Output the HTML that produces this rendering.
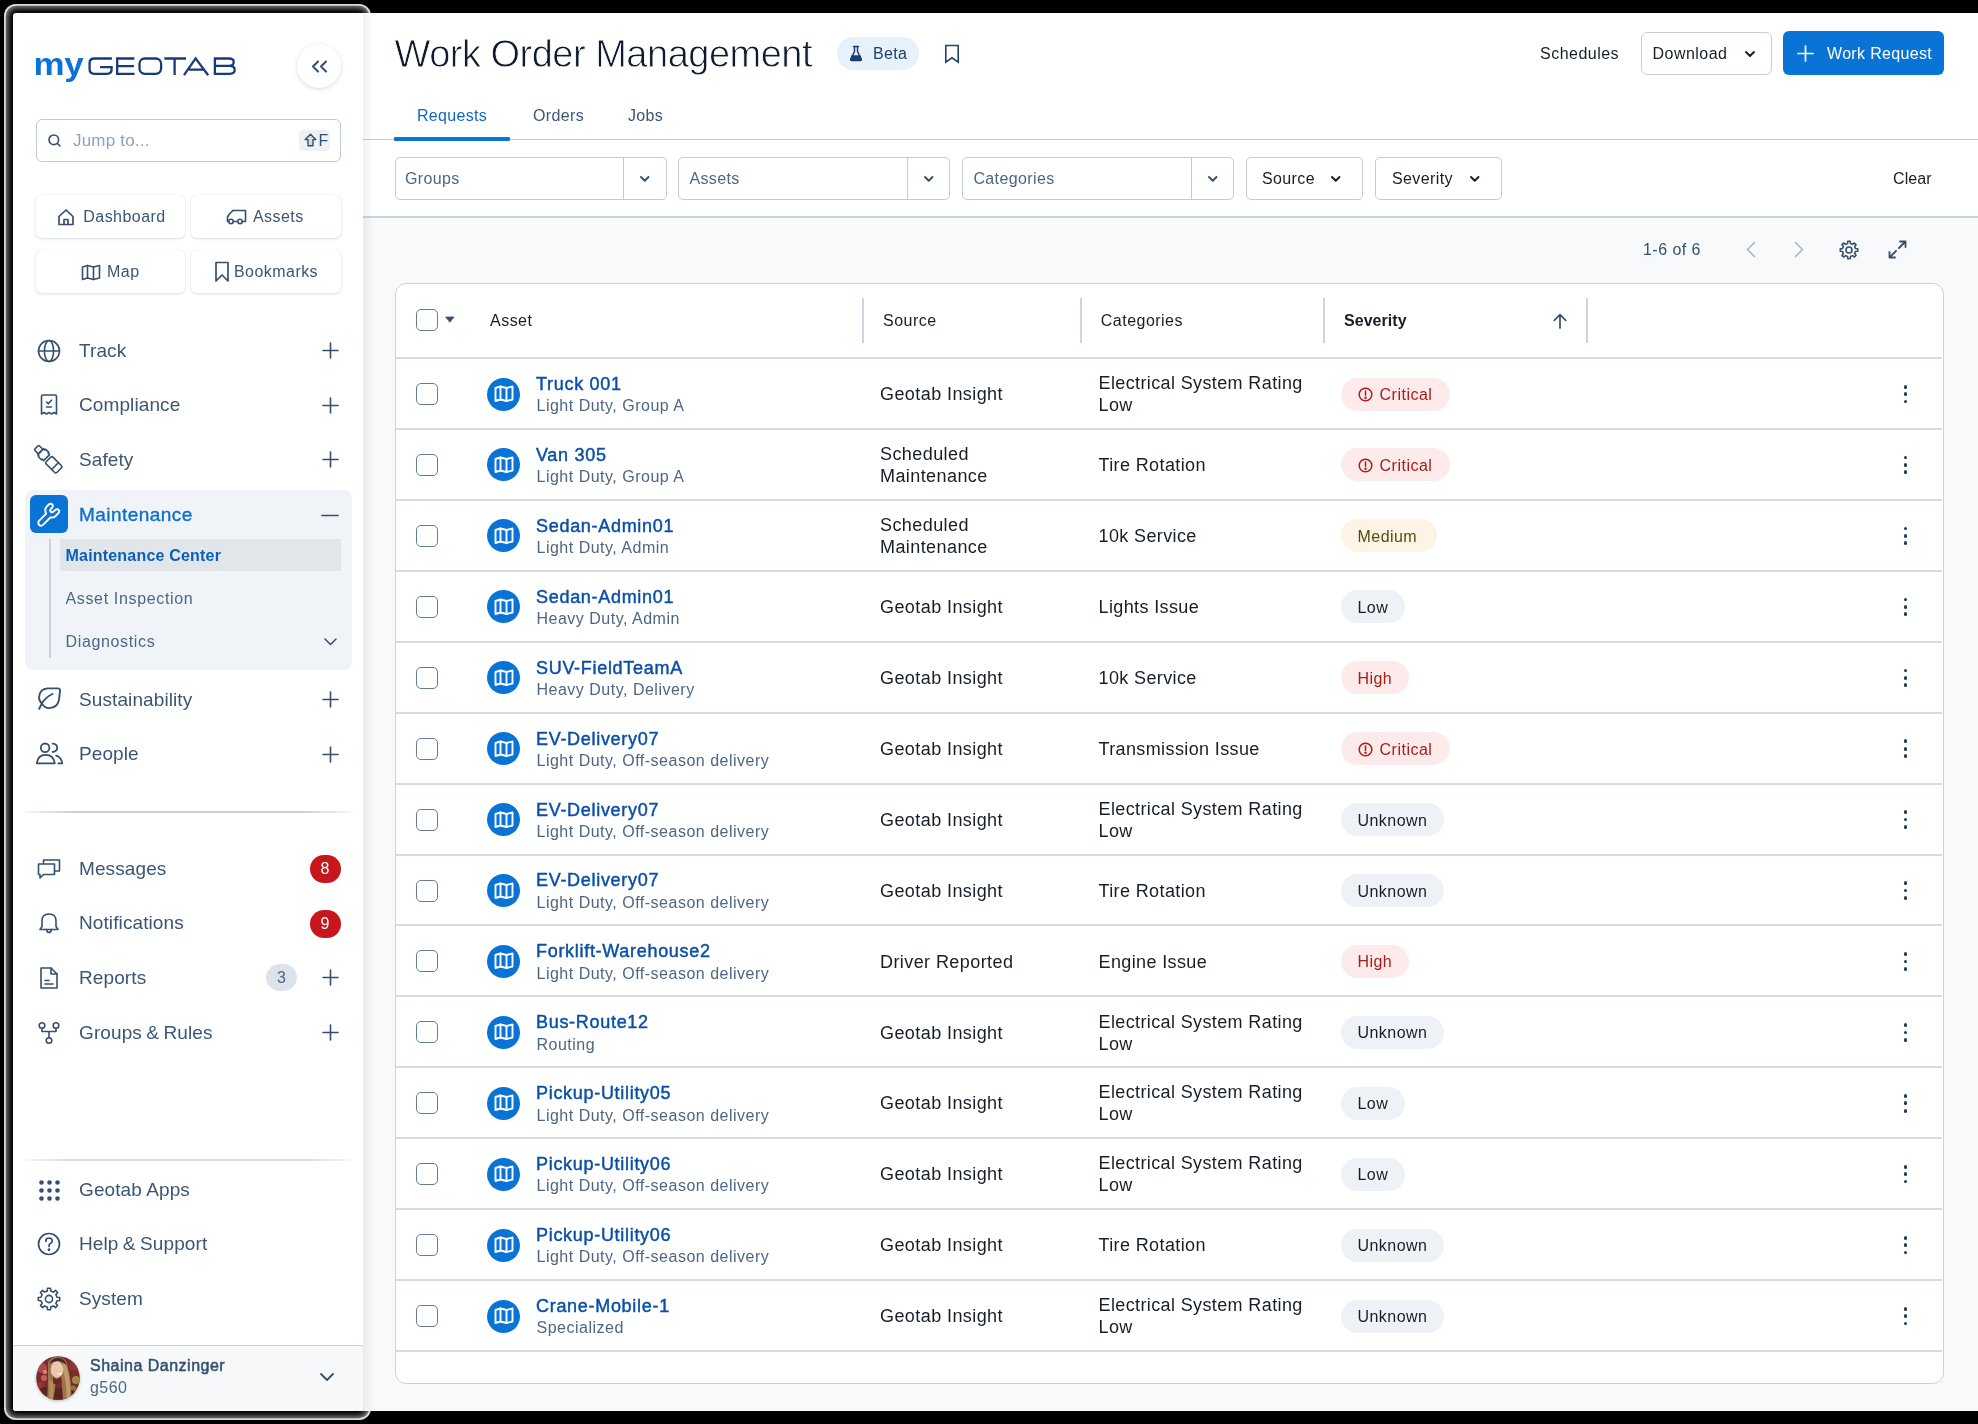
<!DOCTYPE html><html><head><meta charset="utf-8"><title>Work Order Management</title><style>
html,body{margin:0;padding:0;}
body{width:1978px;height:1424px;background:#000;position:relative;overflow:hidden;font-family:"Liberation Sans", sans-serif;}
.t{position:absolute;white-space:nowrap;}
#wrap{position:absolute;left:0;top:0;width:1978px;height:1424px;will-change:transform;}
.b{position:absolute;box-sizing:border-box;}
.i{position:absolute;overflow:visible;}
</style></head><body><div id="wrap">
<div class="b" style="left:4px;top:4px;width:367px;height:1416px;border-radius:12px;background:#000;box-shadow:inset 0 0 0 1.8px rgba(240,240,240,0.8),inset 0 0 6px 3.5px rgba(150,150,150,1);"></div>
<div class="b" style="left:13.0px;top:13.0px;width:350.0px;height:1398.0px;background:#fff;border-radius:3px 0 0 3px;"></div>
<div class="b" style="left:363.0px;top:13.0px;width:10.0px;height:1398.0px;background:linear-gradient(to right,rgba(0,0,0,0.07),rgba(0,0,0,0));"></div>
<svg class="i" style="left:30px;top:48px" width="210" height="40" viewBox="0 0 210 40"><text x="3.2" y="27" font-family="Liberation Sans" font-weight="700" font-size="31.5" fill="#0d72d8" letter-spacing="-0.4" transform="scale(1.11,1)">my</text><g transform="translate(58.4,9.3)" fill="none" stroke="#173a7a" stroke-width="2.3" stroke-linejoin="miter"><path d="M23.5 1.2H6.2Q1.2 1.2 1.2 5.6V12Q1.2 16.5 6.2 16.5H18.6Q23.2 16.5 23.2 12V9.8H11.7"/><path d="M46 1.2H28.8V16.5H46.2M28.8 8.8H45.5"/><rect x="51.1" y="1.2" width="21.6" height="15.3" rx="5.2"/><path d="M75.9 1.2H97.6M86.2 1.2V17.7"/><path d="M95.6 17.9L107.2 1.1L119.8 17.9M100.6 12.4H115.8"/><path d="M125.4 1.2H140.6Q145.3 1.2 145.3 4.7Q145.3 8.6 140.8 8.6H125.4M140.8 8.6Q146.3 8.6 146.3 12.5Q146.3 16.5 141.2 16.5H125.4M126.5 0.05V17.65"/></g></svg>
<div class="b" style="left:297.0px;top:44.0px;width:44.0px;height:44.0px;border-radius:50%;background:#fff;box-shadow:0 1px 4px rgba(30,50,80,0.18);"></div>
<svg class="i" style="left:310.5px;top:60.0px;" width="18" height="13" viewBox="0 0 18 13" fill="none" stroke="#34506e" stroke-width="2.1" stroke-linecap="round" stroke-linejoin="round"><path d="M7 1.5L2 6.5L7 11.5M15 1.5L10 6.5L15 11.5"/></svg>
<div class="b" style="left:36.0px;top:119.0px;width:305.0px;height:43.0px;border:1.5px solid #bccadb;border-radius:6px;background:#fff;"></div>
<svg class="i" style="left:48.0px;top:134.0px;" width="13" height="13" viewBox="0 0 13 13" fill="none" stroke="#34506e" stroke-width="1.6" stroke-linecap="round" stroke-linejoin="round"><circle cx="5.8" cy="5.8" r="4.8"/><path d="M9.5 9.5L12 12"/></svg>
<div class="t" style="left:73.0px;top:127.5px;height:26px;line-height:26px;font-size:17px;color:#8ea3b8;font-weight:400;letter-spacing:0.2px;">Jump to...</div>
<div class="b" style="left:299.0px;top:130.0px;width:31.0px;height:21.0px;background:#eef2f6;border-radius:4px;"></div>
<svg class="i" style="left:303.5px;top:133.0px;" width="13" height="15" viewBox="0 0 13 15" fill="none" stroke="#34506e" stroke-width="1.4" stroke-linecap="round" stroke-linejoin="round"><path d="M6.5 1.2L1.2 6.6H4V12.8H9V6.6H11.8Z" fill="#d3dce6"/></svg>
<div class="t" style="left:318.5px;top:128.5px;height:24px;line-height:24px;font-size:16px;color:#34506e;font-weight:400;letter-spacing:0px;">F</div>
<div class="b" style="left:36.0px;top:195.0px;width:149.0px;height:43.0px;background:#fff;border-radius:6px;box-shadow:0 1px 3px rgba(40,60,90,0.16),0 0 1px rgba(40,60,90,0.12);"></div>
<div class="t" style="left:83.3px;top:204.5px;height:24px;line-height:24px;font-size:16px;color:#3a5674;font-weight:400;letter-spacing:0.45px;">Dashboard</div>
<svg class="i" style="left:57.0px;top:207.5px;" width="18" height="18" viewBox="0 0 18 18" fill="none" stroke="#34506e" stroke-width="1.7" stroke-linecap="round" stroke-linejoin="round"><path d="M2 8.5L9 2L16 8.5V16.5H2Z"/><path d="M7 16.5V11.5H11V16.5"/></svg>
<div class="b" style="left:191.0px;top:195.0px;width:150.0px;height:43.0px;background:#fff;border-radius:6px;box-shadow:0 1px 3px rgba(40,60,90,0.16),0 0 1px rgba(40,60,90,0.12);"></div>
<div class="t" style="left:253.0px;top:204.5px;height:24px;line-height:24px;font-size:16px;color:#3a5674;font-weight:400;letter-spacing:0.45px;">Assets</div>
<svg class="i" style="left:226.0px;top:208.5px;" width="21" height="16" viewBox="0 0 21 16" fill="none" stroke="#34506e" stroke-width="1.6" stroke-linecap="round" stroke-linejoin="round"><path d="M7 1.5H19.5V12.5H16.5M11 12.5H7.5"/><path d="M7 1.5L3 5.5L1.5 8V12.5H2.5"/><circle cx="5" cy="12.5" r="2.2"/><circle cx="14" cy="12.5" r="2.2"/></svg>
<div class="b" style="left:36.0px;top:250.0px;width:149.0px;height:43.0px;background:#fff;border-radius:6px;box-shadow:0 1px 3px rgba(40,60,90,0.16),0 0 1px rgba(40,60,90,0.12);"></div>
<div class="t" style="left:107.0px;top:259.5px;height:24px;line-height:24px;font-size:16px;color:#3a5674;font-weight:400;letter-spacing:0.45px;">Map</div>
<svg class="i" style="left:81.0px;top:263.5px;" width="20" height="17" viewBox="0 0 20 17" fill="none" stroke="#34506e" stroke-width="1.6" stroke-linecap="round" stroke-linejoin="round"><path d="M1.5 3L6.5 1.5L12.5 3L18.5 1.5V14L12.5 15.5L6.5 14L1.5 15.5Z"/><path d="M6.5 1.5V14M12.5 3V15.5"/></svg>
<div class="b" style="left:191.0px;top:250.0px;width:150.0px;height:43.0px;background:#fff;border-radius:6px;box-shadow:0 1px 3px rgba(40,60,90,0.16),0 0 1px rgba(40,60,90,0.12);"></div>
<div class="t" style="left:234.0px;top:259.5px;height:24px;line-height:24px;font-size:16px;color:#3a5674;font-weight:400;letter-spacing:0.45px;">Bookmarks</div>
<svg class="i" style="left:214.0px;top:260.5px;" width="16" height="22" viewBox="0 0 16 22" fill="none" stroke="#34506e" stroke-width="1.7" stroke-linecap="round" stroke-linejoin="round"><path d="M2 1.5H14V20L8 14L2 20Z"/></svg>
<div class="t" style="left:79.0px;top:336.5px;height:28px;line-height:28px;font-size:19px;color:#3a5674;font-weight:400;letter-spacing:0.1px;">Track</div>
<svg class="i" style="left:37.0px;top:338.5px;" width="24" height="24" viewBox="0 0 24 24" fill="none" stroke="#34506e" stroke-width="1.6" stroke-linecap="round" stroke-linejoin="round"><circle cx="12" cy="12" r="10.5"/><ellipse cx="12" cy="12" rx="4.6" ry="10.5"/><path d="M1.5 12H22.5"/></svg>
<svg class="i" style="left:321.5px;top:342.0px;" width="17" height="17" viewBox="0 0 17 17" fill="none" stroke="#34506e" stroke-width="1.6" stroke-linecap="round" stroke-linejoin="round"><path d="M8.5 1V16M1 8.5H16"/></svg>
<div class="t" style="left:79.0px;top:391.0px;height:28px;line-height:28px;font-size:19px;color:#3a5674;font-weight:400;letter-spacing:0.1px;">Compliance</div>
<svg class="i" style="left:40.0px;top:394.0px;" width="18" height="22" viewBox="0 0 18 22" fill="none" stroke="#34506e" stroke-width="1.6" stroke-linecap="round" stroke-linejoin="round"><path d="M1.5 2.5Q1.5 1 3 1H15Q16.5 1 16.5 2.5V20L14 18.5L11.5 20L9 18.5L6.5 20L4 18.5L1.5 20Z"/><path d="M6.5 8L8.3 9.8L11.5 6.2M6.5 13H11.5"/></svg>
<svg class="i" style="left:321.5px;top:396.5px;" width="17" height="17" viewBox="0 0 17 17" fill="none" stroke="#34506e" stroke-width="1.6" stroke-linecap="round" stroke-linejoin="round"><path d="M8.5 1V16M1 8.5H16"/></svg>
<div class="t" style="left:79.0px;top:445.5px;height:28px;line-height:28px;font-size:19px;color:#3a5674;font-weight:400;letter-spacing:0.1px;">Safety</div>
<svg class="i" style="left:35.0px;top:445.5px;" width="28" height="28" viewBox="0 0 28 28" fill="none" stroke="#34506e" stroke-width="1.6" stroke-linecap="round" stroke-linejoin="round"><g transform="rotate(-45 14 14)"><rect x="10.8" y="-3.8" width="6.4" height="6" rx="1.2"/><path d="M9.8 2.2H18.2V4.2H19.2V8.5H18.2V10.6H9.8V8.5H8.8V4.2H9.8Z"/><rect x="9.2" y="13.2" width="9.6" height="15.2" rx="1.5"/><path d="M9.2 22.6H18.8"/></g></svg>
<svg class="i" style="left:321.5px;top:451.0px;" width="17" height="17" viewBox="0 0 17 17" fill="none" stroke="#34506e" stroke-width="1.6" stroke-linecap="round" stroke-linejoin="round"><path d="M8.5 1V16M1 8.5H16"/></svg>
<div class="t" style="left:79.0px;top:685.7px;height:28px;line-height:28px;font-size:19px;color:#3a5674;font-weight:400;letter-spacing:0.1px;">Sustainability</div>
<svg class="i" style="left:37.0px;top:687.4px;" width="25" height="25" viewBox="0 0 25 25" fill="none" stroke="#34506e" stroke-width="1.9" stroke-linecap="round" stroke-linejoin="round"><path d="M5 16.6Q1.5 13 2.2 9.6Q3 2 10.6 1.4H21Q23.2 1.4 23 3.8L22 12.7Q20.5 21 12.1 21.1Q7.5 21 5 16.6Z"/><path d="M2.2 21.8L5.3 15.8Q9 10 15.6 7"/></svg>
<svg class="i" style="left:321.5px;top:691.2px;" width="17" height="17" viewBox="0 0 17 17" fill="none" stroke="#34506e" stroke-width="1.6" stroke-linecap="round" stroke-linejoin="round"><path d="M8.5 1V16M1 8.5H16"/></svg>
<div class="t" style="left:79.0px;top:740.4px;height:28px;line-height:28px;font-size:19px;color:#3a5674;font-weight:400;letter-spacing:0.1px;">People</div>
<svg class="i" style="left:35.5px;top:741.9px;" width="28" height="25" viewBox="0 0 28 25" fill="none" stroke="#34506e" stroke-width="1.8" stroke-linecap="round" stroke-linejoin="round"><circle cx="9.1" cy="5.8" r="4.3"/><path d="M0.8 21.4Q1.8 12.9 9.7 12.9Q17.6 12.9 18.8 21.4Z"/><path d="M16.6 1.6Q21.2 2 21.2 5.8Q21.2 9.6 16.6 10"/><path d="M20.2 13.6Q25.6 15.5 26.3 21.4H22.3"/></svg>
<svg class="i" style="left:321.5px;top:745.9px;" width="17" height="17" viewBox="0 0 17 17" fill="none" stroke="#34506e" stroke-width="1.6" stroke-linecap="round" stroke-linejoin="round"><path d="M8.5 1V16M1 8.5H16"/></svg>
<div class="t" style="left:79.0px;top:854.8px;height:28px;line-height:28px;font-size:19px;color:#3a5674;font-weight:400;letter-spacing:0.1px;">Messages</div>
<svg class="i" style="left:37.0px;top:857.8px;" width="24" height="22" viewBox="0 0 24 22" fill="none" stroke="#34506e" stroke-width="1.6" stroke-linecap="round" stroke-linejoin="round"><path d="M6.5 5.5V2H22.5V13H17.5"/><path d="M1.5 6H17.5V16.5H6.5L3 20V16.5H1.5Z"/></svg>
<div class="t" style="left:79.0px;top:909.0px;height:28px;line-height:28px;font-size:19px;color:#3a5674;font-weight:400;letter-spacing:0.1px;">Notifications</div>
<svg class="i" style="left:38.0px;top:911.0px;" width="22" height="24" viewBox="0 0 22 24" fill="none" stroke="#34506e" stroke-width="1.6" stroke-linecap="round" stroke-linejoin="round"><path d="M2 18.5H20L18 15.5V10Q18 3 11 3Q4 3 4 10V15.5Z"/><path d="M8.5 18.5Q9 21.5 11 21.5Q13 21.5 13.5 18.5"/></svg>
<div class="t" style="left:79.0px;top:963.8px;height:28px;line-height:28px;font-size:19px;color:#3a5674;font-weight:400;letter-spacing:0.1px;">Reports</div>
<svg class="i" style="left:39.0px;top:965.8px;" width="20" height="24" viewBox="0 0 20 24" fill="none" stroke="#34506e" stroke-width="1.6" stroke-linecap="round" stroke-linejoin="round"><path d="M2 2H12L18 8V22H2Z"/><path d="M12 2V8H18"/><path d="M6 14.5H10M6 18H14"/></svg>
<svg class="i" style="left:321.5px;top:969.3px;" width="17" height="17" viewBox="0 0 17 17" fill="none" stroke="#34506e" stroke-width="1.6" stroke-linecap="round" stroke-linejoin="round"><path d="M8.5 1V16M1 8.5H16"/></svg>
<div class="t" style="left:79.0px;top:1018.5px;height:28px;line-height:28px;font-size:19px;color:#3a5674;font-weight:400;letter-spacing:0.1px;">Groups <span style="margin:0 -1px">&amp;</span> Rules</div>
<svg class="i" style="left:37.0px;top:1020.5px;" width="24" height="24" viewBox="0 0 24 24" fill="none" stroke="#34506e" stroke-width="1.6" stroke-linecap="round" stroke-linejoin="round"><circle cx="5" cy="4.5" r="2.8"/><circle cx="19" cy="4.5" r="2.8"/><circle cx="12" cy="19.5" r="2.8"/><path d="M5 7.3V10.5H19V7.3M12 10.5V16.7"/></svg>
<svg class="i" style="left:321.5px;top:1024.0px;" width="17" height="17" viewBox="0 0 17 17" fill="none" stroke="#34506e" stroke-width="1.6" stroke-linecap="round" stroke-linejoin="round"><path d="M8.5 1V16M1 8.5H16"/></svg>
<div class="t" style="left:79.0px;top:1176.0px;height:28px;line-height:28px;font-size:19px;color:#3a5674;font-weight:400;letter-spacing:0.1px;">Geotab Apps</div>
<svg class="i" style="left:38.5px;top:1179.5px;" width="21" height="21" viewBox="0 0 21 21" fill="none" stroke="#34506e" stroke-width="0" stroke-linecap="round" stroke-linejoin="round"><circle cx="2.5" cy="2.5" r="2.3" fill="#34506e" stroke="none"/><circle cx="2.5" cy="10.5" r="2.3" fill="#34506e" stroke="none"/><circle cx="2.5" cy="18.5" r="2.3" fill="#34506e" stroke="none"/><circle cx="10.5" cy="2.5" r="2.3" fill="#34506e" stroke="none"/><circle cx="10.5" cy="10.5" r="2.3" fill="#34506e" stroke="none"/><circle cx="10.5" cy="18.5" r="2.3" fill="#34506e" stroke="none"/><circle cx="18.5" cy="2.5" r="2.3" fill="#34506e" stroke="none"/><circle cx="18.5" cy="10.5" r="2.3" fill="#34506e" stroke="none"/><circle cx="18.5" cy="18.5" r="2.3" fill="#34506e" stroke="none"/></svg>
<div class="t" style="left:79.0px;top:1230.0px;height:28px;line-height:28px;font-size:19px;color:#3a5674;font-weight:400;letter-spacing:0.1px;">Help <span style="margin:0 -1px">&amp;</span> Support</div>
<svg class="i" style="left:37.0px;top:1232.0px;" width="24" height="24" viewBox="0 0 24 24" fill="none" stroke="#34506e" stroke-width="1.7" stroke-linecap="round" stroke-linejoin="round"><circle cx="12" cy="12" r="10.5"/><path d="M8.8 9.2Q8.8 6 12 6Q15.2 6 15.2 9Q15.2 11 12.8 12Q12 12.5 12 14V14.5"/><circle cx="12" cy="17.8" r="0.6" fill="#34506e"/></svg>
<div class="t" style="left:79.0px;top:1284.6px;height:28px;line-height:28px;font-size:19px;color:#3a5674;font-weight:400;letter-spacing:0.1px;">System</div>
<svg class="i" style="left:37.0px;top:1286.6px;" width="24" height="24" viewBox="0 0 24 24" fill="none" stroke="#34506e" stroke-width="1.6" stroke-linecap="round" stroke-linejoin="round"><path d="M20.02 10.24 L22.70 10.52 L22.70 13.48 L20.02 13.76 L18.91 16.43 L20.61 18.52 L18.52 20.61 L16.43 18.91 L13.76 20.02 L13.48 22.70 L10.52 22.70 L10.24 20.02 L7.57 18.91 L5.48 20.61 L3.39 18.52 L5.09 16.43 L3.98 13.76 L1.30 13.48 L1.30 10.52 L3.98 10.24 L5.09 7.57 L3.39 5.48 L5.48 3.39 L7.57 5.09 L10.24 3.98 L10.52 1.30 L13.48 1.30 L13.76 3.98 L16.43 5.09 L18.52 3.39 L20.61 5.48 L18.91 7.57Z"/><circle cx="12.0" cy="12.0" r="3.60"/></svg>
<div class="b" style="left:309.5px;top:855.0px;width:31.0px;height:28.0px;background:#c8161d;border-radius:14px;"></div>
<div class="t" style="left:309.5px;top:857.0px;height:24px;line-height:24px;font-size:16px;color:#fff;font-weight:400;letter-spacing:0px;width:31px;text-align:center;">8</div>
<div class="b" style="left:309.5px;top:909.5px;width:31.0px;height:28.0px;background:#c8161d;border-radius:14px;"></div>
<div class="t" style="left:309.5px;top:911.5px;height:24px;line-height:24px;font-size:16px;color:#fff;font-weight:400;letter-spacing:0px;width:31px;text-align:center;">9</div>
<div class="b" style="left:266.0px;top:964.0px;width:31.0px;height:27.0px;background:#dce3ea;border-radius:14px;"></div>
<div class="t" style="left:266.0px;top:965.5px;height:24px;line-height:24px;font-size:16px;color:#4c6783;font-weight:400;letter-spacing:0px;width:31px;text-align:center;">3</div>
<div class="b" style="left:25.0px;top:490.0px;width:327.0px;height:180.0px;background:#f0f3f7;border-radius:8px;"></div>
<div class="b" style="left:30.0px;top:495.0px;width:38.0px;height:38.0px;background:#0a74d6;border-radius:6px;"></div>
<svg class="i" style="left:36.0px;top:501.5px;" width="26" height="26" viewBox="0 0 26 26" fill="none" stroke="#fff" stroke-width="1.9" stroke-linecap="round" stroke-linejoin="round"><path d="M3 18.8L10.2 11.6Q9.3 10.6 9.3 8.2Q9.3 6 11 4.2L12.8 2.5Q14.6 0.9 16.2 2.3Q17.6 3.8 16.2 5.5L14.6 7.3Q13.6 8.6 14.8 9.8Q16 10.9 17.3 9.8L19.5 7.8Q21.2 6.5 22.6 7.9Q23.9 9.4 22.5 11L19.5 14.2Q18.3 15.5 16.3 15.5H14.4L7 22.9Q5.2 24.5 3.3 23Q1.5 21 3 18.8Z"/></svg>
<div class="t" style="left:79.0px;top:501.0px;height:28px;line-height:28px;font-size:19px;color:#0a6fd0;font-weight:400;letter-spacing:0.45px;-webkit-text-stroke:0.35px #0a6fd0;">Maintenance</div>
<svg class="i" style="left:321.0px;top:513.5px;" width="18" height="3" viewBox="0 0 18 3" fill="none" stroke="#34506e" stroke-width="1.6" stroke-linecap="round" stroke-linejoin="round"><path d="M1 1.5H17"/></svg>
<div class="b" style="left:49.0px;top:539.0px;width:1.5px;height:119.0px;background:#c9d3de;"></div>
<div class="b" style="left:60.0px;top:539.0px;width:281.0px;height:32.0px;background:#e1e6eb;"></div>
<div class="t" style="left:65.5px;top:544.0px;height:24px;line-height:24px;font-size:16px;color:#0a5fb8;font-weight:700;letter-spacing:0.2px;">Maintenance Center</div>
<div class="t" style="left:65.5px;top:586.7px;height:24px;line-height:24px;font-size:16px;color:#4c6783;font-weight:400;letter-spacing:0.65px;">Asset Inspection</div>
<div class="t" style="left:65.5px;top:630.0px;height:24px;line-height:24px;font-size:16px;color:#4c6783;font-weight:400;letter-spacing:0.65px;">Diagnostics</div>
<svg class="i" style="left:323.5px;top:638.2px;" width="13" height="7.5" viewBox="0 0 13 7.5" fill="none" stroke="#34506e" stroke-width="1.5" stroke-linecap="round" stroke-linejoin="round"><path d="M1 1L6.5 6.5L12 1"/></svg>
<div class="b" style="left:25.0px;top:811.0px;width:326.0px;height:1.5px;background:linear-gradient(to right,rgba(200,210,220,0.2),#c9d2dc 15%,#c9d2dc 85%,rgba(200,210,220,0.2));"></div>
<div class="b" style="left:25.0px;top:1159.0px;width:326.0px;height:1.5px;background:linear-gradient(to right,rgba(200,210,220,0.2),#d5dce3 15%,#d5dce3 85%,rgba(200,210,220,0.2));"></div>
<div class="b" style="left:13.0px;top:1345.0px;width:350.0px;height:66.0px;background:#f6f8fa;border-top:1.5px solid #c5d0db;border-radius:0 0 0 3px;"></div>
<svg class="i" style="left:35.5px;top:1356px;filter:drop-shadow(0 1px 1.5px rgba(0,0,0,0.25))" width="44" height="44" viewBox="0 0 44 44"><defs><clipPath id="av"><circle cx="22" cy="22" r="21.8"/></clipPath></defs><g clip-path="url(#av)"><rect width="44" height="44" fill="#7b2b2c"/><circle cx="6" cy="12" r="5" fill="#b04848"/><circle cx="9" cy="16" r="2.2" fill="#d88070"/><circle cx="8" cy="22" r="3" fill="#c06058"/><circle cx="38" cy="10" r="5" fill="#8a3838"/><circle cx="40" cy="24" r="4" fill="#a08a3a"/><circle cx="37" cy="33" r="3.5" fill="#8a7a38"/><circle cx="4" cy="30" r="4" fill="#9a3030"/><circle cx="23" cy="14" r="1.6" fill="#6a9a70"/><path d="M0 44V36Q6 30 14 31L30 32Q40 34 44 40V44Z" fill="#5a2420"/><path d="M12 6Q15 1 22 1Q29 1.5 31 7L34 22Q36 32 35 44H27L26 30Q25 22 24 20L20 26Q19 34 17 44H11Q12 30 12 20Z" fill="#9c7450"/><path d="M26 10Q29 20 30 30Q31 38 30 44H34Q35 32 33 20Q32 12 28 6Z" fill="#c09a6a"/><path d="M13 24Q14 34 13 44H17Q18 34 17 26Z" fill="#b58c5e"/><ellipse cx="21" cy="13.5" rx="6.3" ry="8.2" fill="#ecc7ab"/><path d="M21.5 17.5Q24 19 26 17" stroke="#fff" stroke-width="1.2" fill="none"/><path d="M13 8Q16 1.5 23 2Q29 2.5 30.5 9Q26 5 21 5Q16 5.5 13 8Z" fill="#3e2a20"/><path d="M17 21Q21 25 25 21L26 27Q21 30 17 27Z" fill="#6a2a24"/></g></svg>
<div class="t" style="left:90.0px;top:1354.4px;height:24px;line-height:24px;font-size:16px;color:#34506e;font-weight:400;letter-spacing:0.5px;-webkit-text-stroke:0.5px #34506e;">Shaina Danzinger</div>
<div class="t" style="left:90.0px;top:1376.4px;height:24px;line-height:24px;font-size:16px;color:#4c6783;font-weight:400;letter-spacing:0.45px;">g560</div>
<svg class="i" style="left:320.0px;top:1373.0px;" width="14" height="8.0" viewBox="0 0 14 8.0" fill="none" stroke="#34506e" stroke-width="1.8" stroke-linecap="round" stroke-linejoin="round"><path d="M1 1L7.0 7.0L13 1"/></svg>
<div class="b" style="left:363.0px;top:13.0px;width:1615.0px;height:1398.0px;background:#f7f9fb;"></div>
<div class="b" style="left:363.0px;top:13.0px;width:1615.0px;height:204.0px;background:#fff;"></div>
<div class="b" style="left:363.0px;top:139.0px;width:1615.0px;height:1.0px;background:#c3cdd8;"></div>
<div class="b" style="left:363.0px;top:216.0px;width:1615.0px;height:1.5px;background:#c9d3dd;"></div>
<div class="b" style="left:363.0px;top:13.0px;width:10.0px;height:1398.0px;background:linear-gradient(to right,rgba(0,0,0,0.06),rgba(0,0,0,0));"></div>
<div class="t" style="left:394.5px;top:28.5px;height:50px;line-height:50px;font-size:38px;color:#0f1b2d;font-weight:400;letter-spacing:-0.5px;-webkit-text-stroke:0.8px #fff;">Work Order Management</div>
<div class="b" style="left:837.0px;top:37.0px;width:82.0px;height:33.0px;background:#e6f1fc;border-radius:17px;"></div>
<svg class="i" style="left:849.0px;top:45.0px;" width="14" height="17" viewBox="0 0 14 17" fill="none" stroke="#1d3f6e" stroke-width="1.5" stroke-linecap="round" stroke-linejoin="round"><path d="M4.5 1.5H9.5M5.5 1.5V6.5L1.8 14.2Q1.3 15.5 2.7 15.5H11.3Q12.7 15.5 12.2 14.2L8.5 6.5V1.5"/><path d="M3 11H11L12 14.5H2Z" fill="#1d3f6e"/></svg>
<div class="t" style="left:873.0px;top:41.5px;height:24px;line-height:24px;font-size:16px;color:#1d3f6e;font-weight:400;letter-spacing:0.35px;">Beta</div>
<svg class="i" style="left:944.0px;top:43.5px;stroke-linejoin:miter;stroke-linecap:butt;" width="16" height="20" viewBox="0 0 16 20" fill="none" stroke="#244466" stroke-width="1.6" stroke-linecap="round" stroke-linejoin="round"><path d="M1.8 1.5H14.2V18.2L8 13.8L1.8 18.2Z"/></svg>
<div class="t" style="left:1540.0px;top:41.5px;height:24px;line-height:24px;font-size:16px;color:#171e29;font-weight:400;letter-spacing:0.48px;">Schedules</div>
<div class="b" style="left:1641.0px;top:31.5px;width:130.5px;height:43.3px;background:#fff;border:1.8px solid #c5d0db;border-radius:6px;"></div>
<div class="t" style="left:1652.5px;top:41.8px;height:24px;line-height:24px;font-size:16px;color:#171e29;font-weight:400;letter-spacing:0.47px;">Download</div>
<svg class="i" style="left:1745.0px;top:50.5px;" width="10" height="6.0" viewBox="0 0 10 6.0" fill="none" stroke="#171e29" stroke-width="1.9" stroke-linecap="round" stroke-linejoin="round"><path d="M1 1L5.0 5.0L9 1"/></svg>
<div class="b" style="left:1783.0px;top:31.3px;width:161.0px;height:43.5px;background:#0a74d6;border-radius:6px;"></div>
<svg class="i" style="left:1796.5px;top:44.5px;" width="17" height="17" viewBox="0 0 17 17" fill="none" stroke="#fff" stroke-width="1.7" stroke-linecap="round" stroke-linejoin="round"><path d="M8.5 1V16M1 8.5H16"/></svg>
<div class="t" style="left:1827.0px;top:41.8px;height:24px;line-height:24px;font-size:16px;color:#fff;font-weight:400;letter-spacing:0.33px;">Work Request</div>
<div class="t" style="left:417.0px;top:103.5px;height:24px;line-height:24px;font-size:16px;color:#1467c0;font-weight:400;letter-spacing:0.3px;">Requests</div>
<div class="t" style="left:533.0px;top:103.5px;height:24px;line-height:24px;font-size:16px;color:#3a5674;font-weight:400;letter-spacing:0.35px;">Orders</div>
<div class="t" style="left:628.0px;top:103.5px;height:24px;line-height:24px;font-size:16px;color:#3a5674;font-weight:400;letter-spacing:0.35px;">Jobs</div>
<div class="b" style="left:394.0px;top:136.5px;width:116.0px;height:4.0px;background:#0a74d6;border-radius:1px;"></div>
<div class="b" style="left:394.5px;top:157.0px;width:272.5px;height:43.0px;background:#fff;border:1.5px solid #c2ccd7;border-radius:5px;"></div>
<div class="b" style="left:622.5px;top:158.0px;width:1.5px;height:41.0px;background:#c2ccd7;"></div>
<div class="t" style="left:405.0px;top:166.5px;height:24px;line-height:24px;font-size:16px;color:#4c6783;font-weight:400;letter-spacing:0.38px;">Groups</div>
<svg class="i" style="left:640.0px;top:175.6px;" width="9.5" height="5.75" viewBox="0 0 9.5 5.75" fill="none" stroke="#34506e" stroke-width="1.9" stroke-linecap="round" stroke-linejoin="round"><path d="M1 1L4.75 4.75L8.5 1"/></svg>
<div class="b" style="left:678.3px;top:157.0px;width:272.0px;height:43.0px;background:#fff;border:1.5px solid #c2ccd7;border-radius:5px;"></div>
<div class="b" style="left:906.5px;top:158.0px;width:1.5px;height:41.0px;background:#c2ccd7;"></div>
<div class="t" style="left:689.4px;top:166.5px;height:24px;line-height:24px;font-size:16px;color:#4c6783;font-weight:400;letter-spacing:0.38px;">Assets</div>
<svg class="i" style="left:924.2px;top:175.6px;" width="9.5" height="5.75" viewBox="0 0 9.5 5.75" fill="none" stroke="#34506e" stroke-width="1.9" stroke-linecap="round" stroke-linejoin="round"><path d="M1 1L4.75 4.75L8.5 1"/></svg>
<div class="b" style="left:962.0px;top:157.0px;width:272.0px;height:43.0px;background:#fff;border:1.5px solid #c2ccd7;border-radius:5px;"></div>
<div class="b" style="left:1190.5px;top:158.0px;width:1.5px;height:41.0px;background:#c2ccd7;"></div>
<div class="t" style="left:973.4px;top:166.5px;height:24px;line-height:24px;font-size:16px;color:#4c6783;font-weight:400;letter-spacing:0.38px;">Categories</div>
<svg class="i" style="left:1207.8px;top:175.6px;" width="9.5" height="5.75" viewBox="0 0 9.5 5.75" fill="none" stroke="#34506e" stroke-width="1.9" stroke-linecap="round" stroke-linejoin="round"><path d="M1 1L4.75 4.75L8.5 1"/></svg>
<div class="b" style="left:1246.0px;top:157.0px;width:117.0px;height:43.0px;background:#fff;border:1.5px solid #c2ccd7;border-radius:5px;"></div>
<div class="t" style="left:1262.0px;top:166.5px;height:24px;line-height:24px;font-size:16px;color:#171e29;font-weight:400;letter-spacing:0.38px;">Source</div>
<svg class="i" style="left:1331.2px;top:175.6px;" width="9.5" height="5.75" viewBox="0 0 9.5 5.75" fill="none" stroke="#171e29" stroke-width="1.9" stroke-linecap="round" stroke-linejoin="round"><path d="M1 1L4.75 4.75L8.5 1"/></svg>
<div class="b" style="left:1375.0px;top:157.0px;width:126.5px;height:43.0px;background:#fff;border:1.5px solid #c2ccd7;border-radius:5px;"></div>
<div class="t" style="left:1392.0px;top:166.5px;height:24px;line-height:24px;font-size:16px;color:#171e29;font-weight:400;letter-spacing:0.38px;">Severity</div>
<svg class="i" style="left:1470.2px;top:175.6px;" width="9.5" height="5.75" viewBox="0 0 9.5 5.75" fill="none" stroke="#171e29" stroke-width="1.9" stroke-linecap="round" stroke-linejoin="round"><path d="M1 1L4.75 4.75L8.5 1"/></svg>
<div class="t" style="left:1893.0px;top:166.5px;height:24px;line-height:24px;font-size:16px;color:#171e29;font-weight:400;letter-spacing:0.1px;">Clear</div>
<div class="t" style="left:1643.0px;top:238.4px;height:24px;line-height:24px;font-size:16px;color:#34506e;font-weight:400;letter-spacing:0.46px;">1-6 of 6</div>
<svg class="i" style="left:1744.0px;top:241.0px;" width="13" height="17" viewBox="0 0 13 17" fill="none" stroke="#a9b9c9" stroke-width="1.7" stroke-linecap="round" stroke-linejoin="round"><path d="M10.5 1.5L3.5 8.5L10.5 15.5"/></svg>
<svg class="i" style="left:1793.0px;top:241.0px;" width="13" height="17" viewBox="0 0 13 17" fill="none" stroke="#a9b9c9" stroke-width="1.7" stroke-linecap="round" stroke-linejoin="round"><path d="M2.5 1.5L9.5 8.5L2.5 15.5"/></svg>
<svg class="i" style="left:1838.5px;top:239.7px;" width="20" height="20" viewBox="0 0 20 20" fill="none" stroke="#34506e" stroke-width="1.6" stroke-linecap="round" stroke-linejoin="round"><path d="M16.53 8.57 L18.72 8.79 L18.72 11.21 L16.53 11.43 L15.63 13.61 L17.02 15.31 L15.31 17.02 L13.61 15.63 L11.43 16.53 L11.21 18.72 L8.79 18.72 L8.57 16.53 L6.39 15.63 L4.69 17.02 L2.98 15.31 L4.37 13.61 L3.47 11.43 L1.28 11.21 L1.28 8.79 L3.47 8.57 L4.37 6.39 L2.98 4.69 L4.69 2.98 L6.39 4.37 L8.57 3.47 L8.79 1.28 L11.21 1.28 L11.43 3.47 L13.61 4.37 L15.31 2.98 L17.02 4.69 L15.63 6.39Z"/><circle cx="10.0" cy="10.0" r="3.00"/></svg>
<svg class="i" style="left:1888.0px;top:240.0px;" width="19" height="19" viewBox="0 0 19 19" fill="none" stroke="#34506e" stroke-width="1.8" stroke-linecap="round" stroke-linejoin="round"><path d="M11 8L17.5 1.5M12 1.5H17.5V7M8 11L1.5 17.5M1.5 12V17.5H7"/></svg>
<div class="b" style="left:394.7px;top:283.0px;width:1549.0px;height:1101.0px;background:#fff;border:1.5px solid #c9d3dd;border-radius:11px;"></div>
<div class="b" style="left:416.0px;top:309.0px;width:22.0px;height:22.0px;border:1.6px solid #647d96;border-radius:5px;background:#fff;"></div>
<svg class="i" style="left:445.0px;top:316.0px;" width="10" height="7" viewBox="0 0 10 7" fill="none" stroke="#34506e" stroke-width="0.8" stroke-linecap="round" stroke-linejoin="round"><path d="M1 1H9L5 6Z" fill="#34506e"/></svg>
<div class="t" style="left:490.0px;top:309.2px;height:24px;line-height:24px;font-size:16px;color:#171e29;font-weight:400;letter-spacing:0.48px;">Asset</div>
<div class="t" style="left:883.0px;top:309.2px;height:24px;line-height:24px;font-size:16px;color:#171e29;font-weight:400;letter-spacing:0.48px;">Source</div>
<div class="t" style="left:1100.8px;top:309.2px;height:24px;line-height:24px;font-size:16px;color:#171e29;font-weight:400;letter-spacing:0.48px;">Categories</div>
<div class="t" style="left:1344.0px;top:309.2px;height:24px;line-height:24px;font-size:16px;color:#171e29;font-weight:700;letter-spacing:0.05px;">Severity</div>
<svg class="i" style="left:1552.0px;top:312.0px;" width="16" height="18" viewBox="0 0 16 18" fill="none" stroke="#34506e" stroke-width="1.7" stroke-linecap="round" stroke-linejoin="round"><path d="M8 16V2.8M2.3 8.3L8 2.5L13.7 8.3"/></svg>
<div class="b" style="left:862.4px;top:298.0px;width:2.0px;height:44.5px;background:#cdd6df;"></div>
<div class="b" style="left:1080.2px;top:298.0px;width:2.0px;height:44.5px;background:#cdd6df;"></div>
<div class="b" style="left:1323.3px;top:298.0px;width:2.0px;height:44.5px;background:#cdd6df;"></div>
<div class="b" style="left:1585.5px;top:298.0px;width:2.0px;height:44.5px;background:#cdd6df;"></div>
<div class="b" style="left:396.0px;top:357.0px;width:1546.0px;height:2.0px;background:#d3dce5;"></div>
<div class="b" style="left:396.0px;top:428.0px;width:1546.0px;height:2.0px;background:#d3dce5;"></div>
<div class="b" style="left:416.0px;top:383.0px;width:22.0px;height:22.0px;border:1.6px solid #647d96;border-radius:5px;background:#fff;"></div>
<div class="b" style="left:487.0px;top:377.5px;width:33.0px;height:33.0px;background:#0a74d6;border-radius:50%;"></div>
<svg class="i" style="left:492.5px;top:384.0px;" width="22" height="20" viewBox="0 0 22 20" fill="none" stroke="#fff" stroke-width="1.9" stroke-linecap="round" stroke-linejoin="round"><path d="M2.5 4L7.5 2.5L13.5 4L19.5 2.5V15.5L13.5 17L7.5 15.5L2.5 17Z"/><path d="M7.5 2.5V15.5M13.5 4V17"/></svg>
<div class="t" style="left:536.0px;top:370.9px;height:27px;line-height:27px;font-size:18px;color:#0a4fa8;font-weight:400;letter-spacing:0.7px;-webkit-text-stroke:0.45px #0a4fa8;">Truck 001</div>
<div class="t" style="left:536.5px;top:394.2px;height:24px;line-height:24px;font-size:16px;color:#4c6783;font-weight:400;letter-spacing:0.5px;">Light Duty, Group A</div>
<div class="t" style="left:880.0px;top:381.1px;height:27px;line-height:27px;font-size:18px;color:#171e29;font-weight:400;letter-spacing:0.42px;">Geotab Insight</div>
<div class="t" style="left:1098.5px;top:370.1px;height:27px;line-height:27px;font-size:18px;color:#171e29;font-weight:400;letter-spacing:0.38px;">Electrical System Rating</div>
<div class="t" style="left:1098.5px;top:392.1px;height:27px;line-height:27px;font-size:18px;color:#171e29;font-weight:400;letter-spacing:0.38px;">Low</div>
<div class="b" style="left:1341.0px;top:377.5px;width:109.0px;height:33.0px;background:#fdeaea;border-radius:16.5px;"></div>
<svg class="i" style="left:1357.5px;top:387.3px;" width="15" height="15" viewBox="0 0 15 15" fill="none" stroke="#a81e18" stroke-width="1.5" stroke-linecap="round" stroke-linejoin="round"><circle cx="7.5" cy="7.5" r="6.3"/><path d="M7.5 4V8.3"/><circle cx="7.5" cy="10.8" r="0.5" fill="#a81e18"/></svg>
<div class="t" style="left:1379.5px;top:383.0px;height:24px;line-height:24px;font-size:16px;color:#a81e18;font-weight:400;letter-spacing:0.5px;">Critical</div>
<div class="b" style="left:1903.7px;top:384.8px;width:3.8px;height:3.8px;background:#1d3a5c;border-radius:50%;"></div>
<div class="b" style="left:1903.7px;top:392.1px;width:3.8px;height:3.8px;background:#1d3a5c;border-radius:50%;"></div>
<div class="b" style="left:1903.7px;top:399.5px;width:3.8px;height:3.8px;background:#1d3a5c;border-radius:50%;"></div>
<div class="b" style="left:396.0px;top:499.0px;width:1546.0px;height:2.0px;background:#d3dce5;"></div>
<div class="b" style="left:416.0px;top:453.9px;width:22.0px;height:22.0px;border:1.6px solid #647d96;border-radius:5px;background:#fff;"></div>
<div class="b" style="left:487.0px;top:448.4px;width:33.0px;height:33.0px;background:#0a74d6;border-radius:50%;"></div>
<svg class="i" style="left:492.5px;top:454.9px;" width="22" height="20" viewBox="0 0 22 20" fill="none" stroke="#fff" stroke-width="1.9" stroke-linecap="round" stroke-linejoin="round"><path d="M2.5 4L7.5 2.5L13.5 4L19.5 2.5V15.5L13.5 17L7.5 15.5L2.5 17Z"/><path d="M7.5 2.5V15.5M13.5 4V17"/></svg>
<div class="t" style="left:536.0px;top:441.8px;height:27px;line-height:27px;font-size:18px;color:#0a4fa8;font-weight:400;letter-spacing:0.7px;-webkit-text-stroke:0.45px #0a4fa8;">Van 305</div>
<div class="t" style="left:536.5px;top:465.1px;height:24px;line-height:24px;font-size:16px;color:#4c6783;font-weight:400;letter-spacing:0.5px;">Light Duty, Group A</div>
<div class="t" style="left:880.0px;top:441.0px;height:27px;line-height:27px;font-size:18px;color:#171e29;font-weight:400;letter-spacing:0.42px;">Scheduled</div>
<div class="t" style="left:880.0px;top:463.0px;height:27px;line-height:27px;font-size:18px;color:#171e29;font-weight:400;letter-spacing:0.42px;">Maintenance</div>
<div class="t" style="left:1098.5px;top:452.0px;height:27px;line-height:27px;font-size:18px;color:#171e29;font-weight:400;letter-spacing:0.38px;">Tire Rotation</div>
<div class="b" style="left:1341.0px;top:448.4px;width:109.0px;height:33.0px;background:#fdeaea;border-radius:16.5px;"></div>
<svg class="i" style="left:1357.5px;top:458.2px;" width="15" height="15" viewBox="0 0 15 15" fill="none" stroke="#a81e18" stroke-width="1.5" stroke-linecap="round" stroke-linejoin="round"><circle cx="7.5" cy="7.5" r="6.3"/><path d="M7.5 4V8.3"/><circle cx="7.5" cy="10.8" r="0.5" fill="#a81e18"/></svg>
<div class="t" style="left:1379.5px;top:453.9px;height:24px;line-height:24px;font-size:16px;color:#a81e18;font-weight:400;letter-spacing:0.5px;">Critical</div>
<div class="b" style="left:1903.7px;top:455.7px;width:3.8px;height:3.8px;background:#1d3a5c;border-radius:50%;"></div>
<div class="b" style="left:1903.7px;top:463.0px;width:3.8px;height:3.8px;background:#1d3a5c;border-radius:50%;"></div>
<div class="b" style="left:1903.7px;top:470.4px;width:3.8px;height:3.8px;background:#1d3a5c;border-radius:50%;"></div>
<div class="b" style="left:396.0px;top:570.0px;width:1546.0px;height:2.0px;background:#d3dce5;"></div>
<div class="b" style="left:416.0px;top:524.9px;width:22.0px;height:22.0px;border:1.6px solid #647d96;border-radius:5px;background:#fff;"></div>
<div class="b" style="left:487.0px;top:519.4px;width:33.0px;height:33.0px;background:#0a74d6;border-radius:50%;"></div>
<svg class="i" style="left:492.5px;top:525.9px;" width="22" height="20" viewBox="0 0 22 20" fill="none" stroke="#fff" stroke-width="1.9" stroke-linecap="round" stroke-linejoin="round"><path d="M2.5 4L7.5 2.5L13.5 4L19.5 2.5V15.5L13.5 17L7.5 15.5L2.5 17Z"/><path d="M7.5 2.5V15.5M13.5 4V17"/></svg>
<div class="t" style="left:536.0px;top:512.8px;height:27px;line-height:27px;font-size:18px;color:#0a4fa8;font-weight:400;letter-spacing:0.7px;-webkit-text-stroke:0.45px #0a4fa8;">Sedan-Admin01</div>
<div class="t" style="left:536.5px;top:536.1px;height:24px;line-height:24px;font-size:16px;color:#4c6783;font-weight:400;letter-spacing:0.5px;">Light Duty, Admin</div>
<div class="t" style="left:880.0px;top:512.0px;height:27px;line-height:27px;font-size:18px;color:#171e29;font-weight:400;letter-spacing:0.42px;">Scheduled</div>
<div class="t" style="left:880.0px;top:534.0px;height:27px;line-height:27px;font-size:18px;color:#171e29;font-weight:400;letter-spacing:0.42px;">Maintenance</div>
<div class="t" style="left:1098.5px;top:523.0px;height:27px;line-height:27px;font-size:18px;color:#171e29;font-weight:400;letter-spacing:0.38px;">10k Service</div>
<div class="b" style="left:1341.0px;top:519.4px;width:95.5px;height:33.0px;background:#fdf4e5;border-radius:16.5px;"></div>
<div class="t" style="left:1357.5px;top:524.9px;height:24px;line-height:24px;font-size:16px;color:#5a4810;font-weight:400;letter-spacing:0.45px;">Medium</div>
<div class="b" style="left:1903.7px;top:526.6px;width:3.8px;height:3.8px;background:#1d3a5c;border-radius:50%;"></div>
<div class="b" style="left:1903.7px;top:534.0px;width:3.8px;height:3.8px;background:#1d3a5c;border-radius:50%;"></div>
<div class="b" style="left:1903.7px;top:541.3px;width:3.8px;height:3.8px;background:#1d3a5c;border-radius:50%;"></div>
<div class="b" style="left:396.0px;top:641.0px;width:1546.0px;height:2.0px;background:#d3dce5;"></div>
<div class="b" style="left:416.0px;top:595.8px;width:22.0px;height:22.0px;border:1.6px solid #647d96;border-radius:5px;background:#fff;"></div>
<div class="b" style="left:487.0px;top:590.3px;width:33.0px;height:33.0px;background:#0a74d6;border-radius:50%;"></div>
<svg class="i" style="left:492.5px;top:596.8px;" width="22" height="20" viewBox="0 0 22 20" fill="none" stroke="#fff" stroke-width="1.9" stroke-linecap="round" stroke-linejoin="round"><path d="M2.5 4L7.5 2.5L13.5 4L19.5 2.5V15.5L13.5 17L7.5 15.5L2.5 17Z"/><path d="M7.5 2.5V15.5M13.5 4V17"/></svg>
<div class="t" style="left:536.0px;top:583.7px;height:27px;line-height:27px;font-size:18px;color:#0a4fa8;font-weight:400;letter-spacing:0.7px;-webkit-text-stroke:0.45px #0a4fa8;">Sedan-Admin01</div>
<div class="t" style="left:536.5px;top:607.0px;height:24px;line-height:24px;font-size:16px;color:#4c6783;font-weight:400;letter-spacing:0.5px;">Heavy Duty, Admin</div>
<div class="t" style="left:880.0px;top:593.9px;height:27px;line-height:27px;font-size:18px;color:#171e29;font-weight:400;letter-spacing:0.42px;">Geotab Insight</div>
<div class="t" style="left:1098.5px;top:593.9px;height:27px;line-height:27px;font-size:18px;color:#171e29;font-weight:400;letter-spacing:0.38px;">Lights Issue</div>
<div class="b" style="left:1341.0px;top:590.3px;width:64.0px;height:33.0px;background:#eef2f6;border-radius:16.5px;"></div>
<div class="t" style="left:1357.5px;top:595.8px;height:24px;line-height:24px;font-size:16px;color:#171e29;font-weight:400;letter-spacing:0.45px;">Low</div>
<div class="b" style="left:1903.7px;top:597.5px;width:3.8px;height:3.8px;background:#1d3a5c;border-radius:50%;"></div>
<div class="b" style="left:1903.7px;top:604.9px;width:3.8px;height:3.8px;background:#1d3a5c;border-radius:50%;"></div>
<div class="b" style="left:1903.7px;top:612.2px;width:3.8px;height:3.8px;background:#1d3a5c;border-radius:50%;"></div>
<div class="b" style="left:396.0px;top:712.0px;width:1546.0px;height:2.0px;background:#d3dce5;"></div>
<div class="b" style="left:416.0px;top:666.7px;width:22.0px;height:22.0px;border:1.6px solid #647d96;border-radius:5px;background:#fff;"></div>
<div class="b" style="left:487.0px;top:661.2px;width:33.0px;height:33.0px;background:#0a74d6;border-radius:50%;"></div>
<svg class="i" style="left:492.5px;top:667.7px;" width="22" height="20" viewBox="0 0 22 20" fill="none" stroke="#fff" stroke-width="1.9" stroke-linecap="round" stroke-linejoin="round"><path d="M2.5 4L7.5 2.5L13.5 4L19.5 2.5V15.5L13.5 17L7.5 15.5L2.5 17Z"/><path d="M7.5 2.5V15.5M13.5 4V17"/></svg>
<div class="t" style="left:536.0px;top:654.6px;height:27px;line-height:27px;font-size:18px;color:#0a4fa8;font-weight:400;letter-spacing:0.7px;-webkit-text-stroke:0.45px #0a4fa8;">SUV-FieldTeamA</div>
<div class="t" style="left:536.5px;top:677.9px;height:24px;line-height:24px;font-size:16px;color:#4c6783;font-weight:400;letter-spacing:0.5px;">Heavy Duty, Delivery</div>
<div class="t" style="left:880.0px;top:664.8px;height:27px;line-height:27px;font-size:18px;color:#171e29;font-weight:400;letter-spacing:0.42px;">Geotab Insight</div>
<div class="t" style="left:1098.5px;top:664.8px;height:27px;line-height:27px;font-size:18px;color:#171e29;font-weight:400;letter-spacing:0.38px;">10k Service</div>
<div class="b" style="left:1341.0px;top:661.2px;width:68.0px;height:33.0px;background:#fdeaea;border-radius:16.5px;"></div>
<div class="t" style="left:1357.5px;top:666.7px;height:24px;line-height:24px;font-size:16px;color:#a81e18;font-weight:400;letter-spacing:0.45px;">High</div>
<div class="b" style="left:1903.7px;top:668.5px;width:3.8px;height:3.8px;background:#1d3a5c;border-radius:50%;"></div>
<div class="b" style="left:1903.7px;top:675.8px;width:3.8px;height:3.8px;background:#1d3a5c;border-radius:50%;"></div>
<div class="b" style="left:1903.7px;top:683.2px;width:3.8px;height:3.8px;background:#1d3a5c;border-radius:50%;"></div>
<div class="b" style="left:396.0px;top:783.0px;width:1546.0px;height:2.0px;background:#d3dce5;"></div>
<div class="b" style="left:416.0px;top:737.7px;width:22.0px;height:22.0px;border:1.6px solid #647d96;border-radius:5px;background:#fff;"></div>
<div class="b" style="left:487.0px;top:732.2px;width:33.0px;height:33.0px;background:#0a74d6;border-radius:50%;"></div>
<svg class="i" style="left:492.5px;top:738.7px;" width="22" height="20" viewBox="0 0 22 20" fill="none" stroke="#fff" stroke-width="1.9" stroke-linecap="round" stroke-linejoin="round"><path d="M2.5 4L7.5 2.5L13.5 4L19.5 2.5V15.5L13.5 17L7.5 15.5L2.5 17Z"/><path d="M7.5 2.5V15.5M13.5 4V17"/></svg>
<div class="t" style="left:536.0px;top:725.6px;height:27px;line-height:27px;font-size:18px;color:#0a4fa8;font-weight:400;letter-spacing:0.7px;-webkit-text-stroke:0.45px #0a4fa8;">EV-Delivery07</div>
<div class="t" style="left:536.5px;top:748.9px;height:24px;line-height:24px;font-size:16px;color:#4c6783;font-weight:400;letter-spacing:0.5px;">Light Duty, Off-season delivery</div>
<div class="t" style="left:880.0px;top:735.8px;height:27px;line-height:27px;font-size:18px;color:#171e29;font-weight:400;letter-spacing:0.42px;">Geotab Insight</div>
<div class="t" style="left:1098.5px;top:735.8px;height:27px;line-height:27px;font-size:18px;color:#171e29;font-weight:400;letter-spacing:0.38px;">Transmission Issue</div>
<div class="b" style="left:1341.0px;top:732.2px;width:109.0px;height:33.0px;background:#fdeaea;border-radius:16.5px;"></div>
<svg class="i" style="left:1357.5px;top:742.0px;" width="15" height="15" viewBox="0 0 15 15" fill="none" stroke="#a81e18" stroke-width="1.5" stroke-linecap="round" stroke-linejoin="round"><circle cx="7.5" cy="7.5" r="6.3"/><path d="M7.5 4V8.3"/><circle cx="7.5" cy="10.8" r="0.5" fill="#a81e18"/></svg>
<div class="t" style="left:1379.5px;top:737.7px;height:24px;line-height:24px;font-size:16px;color:#a81e18;font-weight:400;letter-spacing:0.5px;">Critical</div>
<div class="b" style="left:1903.7px;top:739.4px;width:3.8px;height:3.8px;background:#1d3a5c;border-radius:50%;"></div>
<div class="b" style="left:1903.7px;top:746.8px;width:3.8px;height:3.8px;background:#1d3a5c;border-radius:50%;"></div>
<div class="b" style="left:1903.7px;top:754.1px;width:3.8px;height:3.8px;background:#1d3a5c;border-radius:50%;"></div>
<div class="b" style="left:396.0px;top:854.0px;width:1546.0px;height:2.0px;background:#d3dce5;"></div>
<div class="b" style="left:416.0px;top:808.6px;width:22.0px;height:22.0px;border:1.6px solid #647d96;border-radius:5px;background:#fff;"></div>
<div class="b" style="left:487.0px;top:803.1px;width:33.0px;height:33.0px;background:#0a74d6;border-radius:50%;"></div>
<svg class="i" style="left:492.5px;top:809.6px;" width="22" height="20" viewBox="0 0 22 20" fill="none" stroke="#fff" stroke-width="1.9" stroke-linecap="round" stroke-linejoin="round"><path d="M2.5 4L7.5 2.5L13.5 4L19.5 2.5V15.5L13.5 17L7.5 15.5L2.5 17Z"/><path d="M7.5 2.5V15.5M13.5 4V17"/></svg>
<div class="t" style="left:536.0px;top:796.5px;height:27px;line-height:27px;font-size:18px;color:#0a4fa8;font-weight:400;letter-spacing:0.7px;-webkit-text-stroke:0.45px #0a4fa8;">EV-Delivery07</div>
<div class="t" style="left:536.5px;top:819.8px;height:24px;line-height:24px;font-size:16px;color:#4c6783;font-weight:400;letter-spacing:0.5px;">Light Duty, Off-season delivery</div>
<div class="t" style="left:880.0px;top:806.7px;height:27px;line-height:27px;font-size:18px;color:#171e29;font-weight:400;letter-spacing:0.42px;">Geotab Insight</div>
<div class="t" style="left:1098.5px;top:795.7px;height:27px;line-height:27px;font-size:18px;color:#171e29;font-weight:400;letter-spacing:0.38px;">Electrical System Rating</div>
<div class="t" style="left:1098.5px;top:817.7px;height:27px;line-height:27px;font-size:18px;color:#171e29;font-weight:400;letter-spacing:0.38px;">Low</div>
<div class="b" style="left:1341.0px;top:803.1px;width:103.0px;height:33.0px;background:#eef2f6;border-radius:16.5px;"></div>
<div class="t" style="left:1357.5px;top:808.6px;height:24px;line-height:24px;font-size:16px;color:#171e29;font-weight:400;letter-spacing:0.45px;">Unknown</div>
<div class="b" style="left:1903.7px;top:810.3px;width:3.8px;height:3.8px;background:#1d3a5c;border-radius:50%;"></div>
<div class="b" style="left:1903.7px;top:817.7px;width:3.8px;height:3.8px;background:#1d3a5c;border-radius:50%;"></div>
<div class="b" style="left:1903.7px;top:825.0px;width:3.8px;height:3.8px;background:#1d3a5c;border-radius:50%;"></div>
<div class="b" style="left:396.0px;top:924.0px;width:1546.0px;height:2.0px;background:#d3dce5;"></div>
<div class="b" style="left:416.0px;top:879.5px;width:22.0px;height:22.0px;border:1.6px solid #647d96;border-radius:5px;background:#fff;"></div>
<div class="b" style="left:487.0px;top:874.0px;width:33.0px;height:33.0px;background:#0a74d6;border-radius:50%;"></div>
<svg class="i" style="left:492.5px;top:880.5px;" width="22" height="20" viewBox="0 0 22 20" fill="none" stroke="#fff" stroke-width="1.9" stroke-linecap="round" stroke-linejoin="round"><path d="M2.5 4L7.5 2.5L13.5 4L19.5 2.5V15.5L13.5 17L7.5 15.5L2.5 17Z"/><path d="M7.5 2.5V15.5M13.5 4V17"/></svg>
<div class="t" style="left:536.0px;top:867.4px;height:27px;line-height:27px;font-size:18px;color:#0a4fa8;font-weight:400;letter-spacing:0.7px;-webkit-text-stroke:0.45px #0a4fa8;">EV-Delivery07</div>
<div class="t" style="left:536.5px;top:890.7px;height:24px;line-height:24px;font-size:16px;color:#4c6783;font-weight:400;letter-spacing:0.5px;">Light Duty, Off-season delivery</div>
<div class="t" style="left:880.0px;top:877.6px;height:27px;line-height:27px;font-size:18px;color:#171e29;font-weight:400;letter-spacing:0.42px;">Geotab Insight</div>
<div class="t" style="left:1098.5px;top:877.6px;height:27px;line-height:27px;font-size:18px;color:#171e29;font-weight:400;letter-spacing:0.38px;">Tire Rotation</div>
<div class="b" style="left:1341.0px;top:874.0px;width:103.0px;height:33.0px;background:#eef2f6;border-radius:16.5px;"></div>
<div class="t" style="left:1357.5px;top:879.5px;height:24px;line-height:24px;font-size:16px;color:#171e29;font-weight:400;letter-spacing:0.45px;">Unknown</div>
<div class="b" style="left:1903.7px;top:881.3px;width:3.8px;height:3.8px;background:#1d3a5c;border-radius:50%;"></div>
<div class="b" style="left:1903.7px;top:888.6px;width:3.8px;height:3.8px;background:#1d3a5c;border-radius:50%;"></div>
<div class="b" style="left:1903.7px;top:896.0px;width:3.8px;height:3.8px;background:#1d3a5c;border-radius:50%;"></div>
<div class="b" style="left:396.0px;top:995.0px;width:1546.0px;height:2.0px;background:#d3dce5;"></div>
<div class="b" style="left:416.0px;top:950.4px;width:22.0px;height:22.0px;border:1.6px solid #647d96;border-radius:5px;background:#fff;"></div>
<div class="b" style="left:487.0px;top:944.9px;width:33.0px;height:33.0px;background:#0a74d6;border-radius:50%;"></div>
<svg class="i" style="left:492.5px;top:951.4px;" width="22" height="20" viewBox="0 0 22 20" fill="none" stroke="#fff" stroke-width="1.9" stroke-linecap="round" stroke-linejoin="round"><path d="M2.5 4L7.5 2.5L13.5 4L19.5 2.5V15.5L13.5 17L7.5 15.5L2.5 17Z"/><path d="M7.5 2.5V15.5M13.5 4V17"/></svg>
<div class="t" style="left:536.0px;top:938.3px;height:27px;line-height:27px;font-size:18px;color:#0a4fa8;font-weight:400;letter-spacing:0.7px;-webkit-text-stroke:0.45px #0a4fa8;">Forklift-Warehouse2</div>
<div class="t" style="left:536.5px;top:961.6px;height:24px;line-height:24px;font-size:16px;color:#4c6783;font-weight:400;letter-spacing:0.5px;">Light Duty, Off-season delivery</div>
<div class="t" style="left:880.0px;top:948.5px;height:27px;line-height:27px;font-size:18px;color:#171e29;font-weight:400;letter-spacing:0.42px;">Driver Reported</div>
<div class="t" style="left:1098.5px;top:948.5px;height:27px;line-height:27px;font-size:18px;color:#171e29;font-weight:400;letter-spacing:0.38px;">Engine Issue</div>
<div class="b" style="left:1341.0px;top:944.9px;width:68.0px;height:33.0px;background:#fdeaea;border-radius:16.5px;"></div>
<div class="t" style="left:1357.5px;top:950.4px;height:24px;line-height:24px;font-size:16px;color:#a81e18;font-weight:400;letter-spacing:0.45px;">High</div>
<div class="b" style="left:1903.7px;top:952.2px;width:3.8px;height:3.8px;background:#1d3a5c;border-radius:50%;"></div>
<div class="b" style="left:1903.7px;top:959.5px;width:3.8px;height:3.8px;background:#1d3a5c;border-radius:50%;"></div>
<div class="b" style="left:1903.7px;top:966.9px;width:3.8px;height:3.8px;background:#1d3a5c;border-radius:50%;"></div>
<div class="b" style="left:396.0px;top:1066.0px;width:1546.0px;height:2.0px;background:#d3dce5;"></div>
<div class="b" style="left:416.0px;top:1021.4px;width:22.0px;height:22.0px;border:1.6px solid #647d96;border-radius:5px;background:#fff;"></div>
<div class="b" style="left:487.0px;top:1015.9px;width:33.0px;height:33.0px;background:#0a74d6;border-radius:50%;"></div>
<svg class="i" style="left:492.5px;top:1022.4px;" width="22" height="20" viewBox="0 0 22 20" fill="none" stroke="#fff" stroke-width="1.9" stroke-linecap="round" stroke-linejoin="round"><path d="M2.5 4L7.5 2.5L13.5 4L19.5 2.5V15.5L13.5 17L7.5 15.5L2.5 17Z"/><path d="M7.5 2.5V15.5M13.5 4V17"/></svg>
<div class="t" style="left:536.0px;top:1009.3px;height:27px;line-height:27px;font-size:18px;color:#0a4fa8;font-weight:400;letter-spacing:0.7px;-webkit-text-stroke:0.45px #0a4fa8;">Bus-Route12</div>
<div class="t" style="left:536.5px;top:1032.6px;height:24px;line-height:24px;font-size:16px;color:#4c6783;font-weight:400;letter-spacing:0.5px;">Routing</div>
<div class="t" style="left:880.0px;top:1019.5px;height:27px;line-height:27px;font-size:18px;color:#171e29;font-weight:400;letter-spacing:0.42px;">Geotab Insight</div>
<div class="t" style="left:1098.5px;top:1008.5px;height:27px;line-height:27px;font-size:18px;color:#171e29;font-weight:400;letter-spacing:0.38px;">Electrical System Rating</div>
<div class="t" style="left:1098.5px;top:1030.5px;height:27px;line-height:27px;font-size:18px;color:#171e29;font-weight:400;letter-spacing:0.38px;">Low</div>
<div class="b" style="left:1341.0px;top:1015.9px;width:103.0px;height:33.0px;background:#eef2f6;border-radius:16.5px;"></div>
<div class="t" style="left:1357.5px;top:1021.4px;height:24px;line-height:24px;font-size:16px;color:#171e29;font-weight:400;letter-spacing:0.45px;">Unknown</div>
<div class="b" style="left:1903.7px;top:1023.1px;width:3.8px;height:3.8px;background:#1d3a5c;border-radius:50%;"></div>
<div class="b" style="left:1903.7px;top:1030.5px;width:3.8px;height:3.8px;background:#1d3a5c;border-radius:50%;"></div>
<div class="b" style="left:1903.7px;top:1037.8px;width:3.8px;height:3.8px;background:#1d3a5c;border-radius:50%;"></div>
<div class="b" style="left:396.0px;top:1137.0px;width:1546.0px;height:2.0px;background:#d3dce5;"></div>
<div class="b" style="left:416.0px;top:1092.3px;width:22.0px;height:22.0px;border:1.6px solid #647d96;border-radius:5px;background:#fff;"></div>
<div class="b" style="left:487.0px;top:1086.8px;width:33.0px;height:33.0px;background:#0a74d6;border-radius:50%;"></div>
<svg class="i" style="left:492.5px;top:1093.3px;" width="22" height="20" viewBox="0 0 22 20" fill="none" stroke="#fff" stroke-width="1.9" stroke-linecap="round" stroke-linejoin="round"><path d="M2.5 4L7.5 2.5L13.5 4L19.5 2.5V15.5L13.5 17L7.5 15.5L2.5 17Z"/><path d="M7.5 2.5V15.5M13.5 4V17"/></svg>
<div class="t" style="left:536.0px;top:1080.2px;height:27px;line-height:27px;font-size:18px;color:#0a4fa8;font-weight:400;letter-spacing:0.7px;-webkit-text-stroke:0.45px #0a4fa8;">Pickup-Utility05</div>
<div class="t" style="left:536.5px;top:1103.5px;height:24px;line-height:24px;font-size:16px;color:#4c6783;font-weight:400;letter-spacing:0.5px;">Light Duty, Off-season delivery</div>
<div class="t" style="left:880.0px;top:1090.4px;height:27px;line-height:27px;font-size:18px;color:#171e29;font-weight:400;letter-spacing:0.42px;">Geotab Insight</div>
<div class="t" style="left:1098.5px;top:1079.4px;height:27px;line-height:27px;font-size:18px;color:#171e29;font-weight:400;letter-spacing:0.38px;">Electrical System Rating</div>
<div class="t" style="left:1098.5px;top:1101.4px;height:27px;line-height:27px;font-size:18px;color:#171e29;font-weight:400;letter-spacing:0.38px;">Low</div>
<div class="b" style="left:1341.0px;top:1086.8px;width:64.0px;height:33.0px;background:#eef2f6;border-radius:16.5px;"></div>
<div class="t" style="left:1357.5px;top:1092.3px;height:24px;line-height:24px;font-size:16px;color:#171e29;font-weight:400;letter-spacing:0.45px;">Low</div>
<div class="b" style="left:1903.7px;top:1094.1px;width:3.8px;height:3.8px;background:#1d3a5c;border-radius:50%;"></div>
<div class="b" style="left:1903.7px;top:1101.4px;width:3.8px;height:3.8px;background:#1d3a5c;border-radius:50%;"></div>
<div class="b" style="left:1903.7px;top:1108.8px;width:3.8px;height:3.8px;background:#1d3a5c;border-radius:50%;"></div>
<div class="b" style="left:396.0px;top:1208.0px;width:1546.0px;height:2.0px;background:#d3dce5;"></div>
<div class="b" style="left:416.0px;top:1163.2px;width:22.0px;height:22.0px;border:1.6px solid #647d96;border-radius:5px;background:#fff;"></div>
<div class="b" style="left:487.0px;top:1157.7px;width:33.0px;height:33.0px;background:#0a74d6;border-radius:50%;"></div>
<svg class="i" style="left:492.5px;top:1164.2px;" width="22" height="20" viewBox="0 0 22 20" fill="none" stroke="#fff" stroke-width="1.9" stroke-linecap="round" stroke-linejoin="round"><path d="M2.5 4L7.5 2.5L13.5 4L19.5 2.5V15.5L13.5 17L7.5 15.5L2.5 17Z"/><path d="M7.5 2.5V15.5M13.5 4V17"/></svg>
<div class="t" style="left:536.0px;top:1151.1px;height:27px;line-height:27px;font-size:18px;color:#0a4fa8;font-weight:400;letter-spacing:0.7px;-webkit-text-stroke:0.45px #0a4fa8;">Pickup-Utility06</div>
<div class="t" style="left:536.5px;top:1174.4px;height:24px;line-height:24px;font-size:16px;color:#4c6783;font-weight:400;letter-spacing:0.5px;">Light Duty, Off-season delivery</div>
<div class="t" style="left:880.0px;top:1161.3px;height:27px;line-height:27px;font-size:18px;color:#171e29;font-weight:400;letter-spacing:0.42px;">Geotab Insight</div>
<div class="t" style="left:1098.5px;top:1150.3px;height:27px;line-height:27px;font-size:18px;color:#171e29;font-weight:400;letter-spacing:0.38px;">Electrical System Rating</div>
<div class="t" style="left:1098.5px;top:1172.3px;height:27px;line-height:27px;font-size:18px;color:#171e29;font-weight:400;letter-spacing:0.38px;">Low</div>
<div class="b" style="left:1341.0px;top:1157.7px;width:64.0px;height:33.0px;background:#eef2f6;border-radius:16.5px;"></div>
<div class="t" style="left:1357.5px;top:1163.2px;height:24px;line-height:24px;font-size:16px;color:#171e29;font-weight:400;letter-spacing:0.45px;">Low</div>
<div class="b" style="left:1903.7px;top:1165.0px;width:3.8px;height:3.8px;background:#1d3a5c;border-radius:50%;"></div>
<div class="b" style="left:1903.7px;top:1172.3px;width:3.8px;height:3.8px;background:#1d3a5c;border-radius:50%;"></div>
<div class="b" style="left:1903.7px;top:1179.7px;width:3.8px;height:3.8px;background:#1d3a5c;border-radius:50%;"></div>
<div class="b" style="left:396.0px;top:1279.0px;width:1546.0px;height:2.0px;background:#d3dce5;"></div>
<div class="b" style="left:416.0px;top:1234.2px;width:22.0px;height:22.0px;border:1.6px solid #647d96;border-radius:5px;background:#fff;"></div>
<div class="b" style="left:487.0px;top:1228.7px;width:33.0px;height:33.0px;background:#0a74d6;border-radius:50%;"></div>
<svg class="i" style="left:492.5px;top:1235.2px;" width="22" height="20" viewBox="0 0 22 20" fill="none" stroke="#fff" stroke-width="1.9" stroke-linecap="round" stroke-linejoin="round"><path d="M2.5 4L7.5 2.5L13.5 4L19.5 2.5V15.5L13.5 17L7.5 15.5L2.5 17Z"/><path d="M7.5 2.5V15.5M13.5 4V17"/></svg>
<div class="t" style="left:536.0px;top:1222.1px;height:27px;line-height:27px;font-size:18px;color:#0a4fa8;font-weight:400;letter-spacing:0.7px;-webkit-text-stroke:0.45px #0a4fa8;">Pickup-Utility06</div>
<div class="t" style="left:536.5px;top:1245.4px;height:24px;line-height:24px;font-size:16px;color:#4c6783;font-weight:400;letter-spacing:0.5px;">Light Duty, Off-season delivery</div>
<div class="t" style="left:880.0px;top:1232.3px;height:27px;line-height:27px;font-size:18px;color:#171e29;font-weight:400;letter-spacing:0.42px;">Geotab Insight</div>
<div class="t" style="left:1098.5px;top:1232.3px;height:27px;line-height:27px;font-size:18px;color:#171e29;font-weight:400;letter-spacing:0.38px;">Tire Rotation</div>
<div class="b" style="left:1341.0px;top:1228.7px;width:103.0px;height:33.0px;background:#eef2f6;border-radius:16.5px;"></div>
<div class="t" style="left:1357.5px;top:1234.2px;height:24px;line-height:24px;font-size:16px;color:#171e29;font-weight:400;letter-spacing:0.45px;">Unknown</div>
<div class="b" style="left:1903.7px;top:1235.9px;width:3.8px;height:3.8px;background:#1d3a5c;border-radius:50%;"></div>
<div class="b" style="left:1903.7px;top:1243.3px;width:3.8px;height:3.8px;background:#1d3a5c;border-radius:50%;"></div>
<div class="b" style="left:1903.7px;top:1250.6px;width:3.8px;height:3.8px;background:#1d3a5c;border-radius:50%;"></div>
<div class="b" style="left:396.0px;top:1350.0px;width:1546.0px;height:2.0px;background:#d3dce5;"></div>
<div class="b" style="left:416.0px;top:1305.1px;width:22.0px;height:22.0px;border:1.6px solid #647d96;border-radius:5px;background:#fff;"></div>
<div class="b" style="left:487.0px;top:1299.6px;width:33.0px;height:33.0px;background:#0a74d6;border-radius:50%;"></div>
<svg class="i" style="left:492.5px;top:1306.1px;" width="22" height="20" viewBox="0 0 22 20" fill="none" stroke="#fff" stroke-width="1.9" stroke-linecap="round" stroke-linejoin="round"><path d="M2.5 4L7.5 2.5L13.5 4L19.5 2.5V15.5L13.5 17L7.5 15.5L2.5 17Z"/><path d="M7.5 2.5V15.5M13.5 4V17"/></svg>
<div class="t" style="left:536.0px;top:1293.0px;height:27px;line-height:27px;font-size:18px;color:#0a4fa8;font-weight:400;letter-spacing:0.7px;-webkit-text-stroke:0.45px #0a4fa8;">Crane-Mobile-1</div>
<div class="t" style="left:536.5px;top:1316.3px;height:24px;line-height:24px;font-size:16px;color:#4c6783;font-weight:400;letter-spacing:0.5px;">Specialized</div>
<div class="t" style="left:880.0px;top:1303.2px;height:27px;line-height:27px;font-size:18px;color:#171e29;font-weight:400;letter-spacing:0.42px;">Geotab Insight</div>
<div class="t" style="left:1098.5px;top:1292.2px;height:27px;line-height:27px;font-size:18px;color:#171e29;font-weight:400;letter-spacing:0.38px;">Electrical System Rating</div>
<div class="t" style="left:1098.5px;top:1314.2px;height:27px;line-height:27px;font-size:18px;color:#171e29;font-weight:400;letter-spacing:0.38px;">Low</div>
<div class="b" style="left:1341.0px;top:1299.6px;width:103.0px;height:33.0px;background:#eef2f6;border-radius:16.5px;"></div>
<div class="t" style="left:1357.5px;top:1305.1px;height:24px;line-height:24px;font-size:16px;color:#171e29;font-weight:400;letter-spacing:0.45px;">Unknown</div>
<div class="b" style="left:1903.7px;top:1306.8px;width:3.8px;height:3.8px;background:#1d3a5c;border-radius:50%;"></div>
<div class="b" style="left:1903.7px;top:1314.2px;width:3.8px;height:3.8px;background:#1d3a5c;border-radius:50%;"></div>
<div class="b" style="left:1903.7px;top:1321.5px;width:3.8px;height:3.8px;background:#1d3a5c;border-radius:50%;"></div>
</div></body></html>
